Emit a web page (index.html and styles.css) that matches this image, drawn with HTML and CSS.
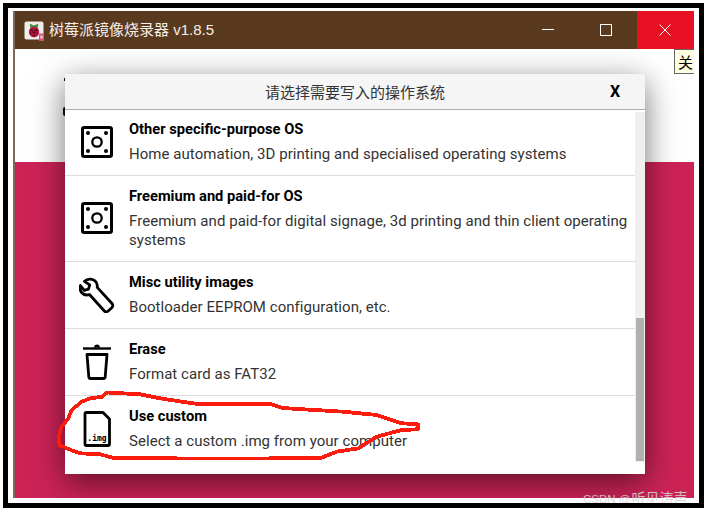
FILE: index.html
```html
<!DOCTYPE html>
<html lang="zh">
<head>
<meta charset="utf-8">
<title>树莓派镜像烧录器 v1.8.5</title>
<link rel="stylesheet" href="styles.css">
</head>
<body>
<div class="frame">
  <div class="window">
    <header class="titlebar">
      <svg class="app-icon" width="20" height="20" viewBox="0 0 20 20">
        <rect x="0.5" y="0.5" width="19" height="18" rx="2" fill="#efeeea"/>
        <path d="M6 3.5l3.5 2M14 3.5l-3.5 2M7 5h6v1.5H7z" stroke="#3f8a3a" stroke-width="1.6" fill="#3f8a3a"/>
        <circle cx="10" cy="11" r="5.2" fill="#b3183f"/>
        <circle cx="7.8" cy="9" r="1.3" fill="#5d0f25"/><circle cx="12.2" cy="9" r="1.3" fill="#5d0f25"/>
        <circle cx="10" cy="11.3" r="1.3" fill="#5d0f25"/><circle cx="7" cy="12.3" r="1.1" fill="#7c1230"/>
        <circle cx="13" cy="12.3" r="1.1" fill="#7c1230"/><circle cx="10" cy="14.5" r="1.1" fill="#5d0f25"/>
        <rect x="15" y="12.5" width="5" height="7.5" rx="0.8" fill="#d8557c"/>
        <rect x="16.5" y="14.5" width="2" height="3" fill="#f6d3de"/>
      </svg>
      <span class="app-title">树莓派镜像烧录器 v1.8.5</span>
      <div class="controls">
        <button class="ctl" aria-label="最小化"><svg width="14" height="14" viewBox="0 0 14 14"><path d="M1 6.500h12" stroke="#fff" stroke-width="1"/></svg></button>
        <button class="ctl" aria-label="最大化"><svg width="14" height="14" viewBox="0 0 14 14"><rect x="1.5" y="1.5" width="11" height="11" fill="none" stroke="#fff" stroke-width="1"/></svg></button>
        <button class="ctl ctl-close" aria-label="关闭"><svg width="14" height="14" viewBox="0 0 14 14"><path d="M1.5 1.500l11 11M12.500 1.500l-11 11" stroke="#fff" stroke-width="1"/></svg></button>
      </div>
    </header>
    <div class="content">
      <div class="upper"></div>
      <div class="lower"></div>
    </div>
    <span class="peek peek-a"></span>
    <span class="peek peek-b"></span>
    <div class="tooltip">关闭</div>

    <section class="modal">
      <div class="modal-head">
        <span class="head-side"></span>
        <span class="head-title">请选择需要写入的操作系统</span>
        <span class="head-side head-x">X</span>
      </div>
      <div class="list">
        <div class="row">
          <span class="icon"><svg width="36" height="36" viewBox="0 0 36 36"><use href="#disc"/></svg></span>
          <div class="text"><h3>Other specific-purpose OS</h3><p>Home automation, 3D printing and specialised operating systems</p></div>
        </div>
        <div class="row">
          <span class="icon"><svg width="36" height="36" viewBox="0 0 36 36"><use href="#disc"/></svg></span>
          <div class="text"><h3>Freemium and paid-for OS</h3><p>Freemium and paid-for digital signage, 3d printing and thin client operating systems</p></div>
        </div>
        <div class="row">
          <span class="icon"><svg width="36" height="36" viewBox="0 0 36 36">
            <path d="M11.500 2.200c-2.200-.2-4.400.6-6 2.100l5.200 3.600-1.200 4.300-4.200 1.200L1.400 8.600C.6 11 1 13.600 2.600 15.500c2 2.300 5.100 3 7.900 2l14.600 16.300c1.100 1.200 2.900 1.200 4.100.2l3.600-3.300c1.200-1.100 1.300-3 .2-4.200L18.200 10.400c.5-3-.6-5.200-2.200-6.500-1.300-1-2.800-1.500-4.500-1.700z" fill="none" stroke="#000" stroke-width="2.800" stroke-linejoin="round"/>
          </svg></span>
          <div class="text"><h3>Misc utility images</h3><p>Bootloader EEPROM configuration, etc.</p></div>
        </div>
        <div class="row">
          <span class="icon"><svg width="36" height="36" viewBox="0 0 36 36">
            <path d="M4 4.500h28" stroke="#000" stroke-width="2.400"/>
            <path d="M15 3.500c0-4 6-4 6 0z" fill="#000"/>
            <path d="M8 10.500h20l-1.800 22.400c-.1 1-.8 1.600-1.700 1.600H11.500c-.9 0-1.600-.6-1.700-1.600z" fill="none" stroke="#000" stroke-width="2.800" stroke-linejoin="round"/>
          </svg></span>
          <div class="text"><h3>Erase</h3><p>Format card as FAT32</p></div>
        </div>
        <div class="row row-last">
          <span class="icon"><svg width="36" height="36" viewBox="0 0 36 36">
            <path d="M7.500 1.500h16.500L30.500 8v25c0 .9-.6 1.500-1.500 1.500H7.500c-.9 0-1.500-.6-1.500-1.500V3c0-.9.6-1.500 1.500-1.500z" fill="none" stroke="#000" stroke-width="2.800" stroke-linejoin="round"/>
            <text class="img-label" x="18" y="29.500" text-anchor="middle">.img</text>
          </svg></span>
          <div class="text"><h3>Use custom</h3><p>Select a custom .img from your computer</p></div>
        </div>
      </div>
      <div class="track"></div>
      <div class="thumb"></div>
    </section>
  </div>

  <svg class="ink" width="709" height="512" viewBox="0 0 709 512">
    <path d="M107 392.500 L102 396.700 L90 398.500 L81.700 401.700 L71.700 410 L68.300 418.300 L61.700 426.700 L58.500 436.700 L59.500 445 L68.300 449 L80 453.300 L100 454.300 L115 458.300 L230 458.500 L320 458.300 L336.700 451.700 L358.300 448.300 L376.700 436.700 L401.700 430 L418 429.300 L418 424.300 L401.700 423.300 L376.700 415 L343.300 411.700 L303.300 409.300 L283 408 L271.700 404.300 L240 404.300 L200 404.300 L181.700 401.700 L160 398.300 L140 394.300 Z" fill="none" stroke="#fb1c10" stroke-width="3.800" stroke-linejoin="round" shape-rendering="crispEdges"/>
  </svg>
  <div class="mark"><span class="mark-latin">CSDN @</span>听见涛声</div>
</div>

<svg class="defs" width="0" height="0" aria-hidden="true">
  <defs>
    <g id="disc">
      <rect x="3.500" y="3.500" width="29" height="29" rx="1.800" fill="none" stroke="#000" stroke-width="3"/>
      <circle cx="9" cy="9" r="2" fill="#000"/><circle cx="27" cy="9" r="2" fill="#000"/>
      <circle cx="9" cy="27" r="2" fill="#000"/><circle cx="27" cy="27" r="2" fill="#000"/>
      <circle cx="18" cy="18" r="4.700" fill="none" stroke="#000" stroke-width="2.300"/>
    </g>
  </defs>
</svg>
</body>
</html>
```

FILE: styles.css
```css
* { box-sizing: border-box; }
html, body { margin: 0; padding: 0; background: #fff; }
body { width: 709px; height: 512px; overflow: hidden; padding: 3px 5px 4px 3px; }
.defs { position: absolute; }

.frame {
  height: 505px;
  border: 5px solid #000;
  background: #fff;
  padding: 3px 5px 5px 5px;
  overflow: hidden;
}
.frame > .ink { position: absolute; left: 0; top: 0; pointer-events: none; }
.mark {
  position: absolute;
  left: 583px;
  top: 487px;
  width: 115px;
  height: 16px;
  overflow: hidden;
  font: 14px/20px "Noto Sans CJK SC", sans-serif;
  color: rgba(214, 214, 214, .85);
  white-space: nowrap;
}
.mark-latin { font: 11.500px/20px "Liberation Sans", sans-serif; margin-right: 1px; }

.window {
  position: relative;
  height: 100%;
  display: flex;
  flex-direction: column;
  border-left: 2px solid #7d6a5a;
  overflow: hidden;
  font-family: Roboto, "Noto Sans CJK SC", sans-serif;
}

.titlebar {
  flex: 0 0 38px;
  display: flex;
  align-items: center;
  gap: 5px;
  padding-left: 9px;
  background: #5a3a1e;
  color: #fff;
}
.app-icon { flex: none; margin-top: 1px; }
.app-title {
  font: 15px/20px "Liberation Sans", "Noto Sans CJK SC", sans-serif;
  color: #f4efe9;
}
.controls { margin-left: auto; display: flex; height: 100%; }
.ctl {
  width: 58px;
  padding: 0 4px 0 0;
  border: 0;
  background: none;
  display: flex;
  align-items: center;
  justify-content: center;
}
.ctl-close { width: 57px; padding: 0 1px 0 0; background: #e81123; }

.content { flex: 1; display: flex; flex-direction: column; }
.upper { flex: 0 0 113px; background: #fff; }
.lower { flex: 1; background: #cc2357; }

.peek { position: absolute; background: #111; }
.peek-a { left: 49px; top: 67px; width: 1px; height: 3px; }
.peek-b { left: 48px; top: 96px; width: 2px; height: 9px; border-radius: 2px 0 0 2px; }

.tooltip {
  position: absolute;
  left: 659px;
  top: 38px;
  width: 40px;
  height: 25px;
  padding: 3px 0 0 3px;
  background: #ffffe1;
  border: 1px solid #666;
  font: 15px/18px "Noto Sans CJK SC", sans-serif;
  color: #000;
  white-space: nowrap;
  overflow: hidden;
}

.modal {
  position: absolute;
  left: 50px;
  top: 63px;
  width: 580px;
  height: 400px;
  background: #fff;
  box-shadow: 0 8px 30px rgba(0, 0, 0, .55);
  display: flex;
  flex-direction: column;
}
.modal-head {
  flex: 0 0 36px;
  display: flex;
  align-items: center;
  background: #f5f5f5;
  border-bottom: 1px solid #adadad;
}
.head-side { flex: 0 0 60px; text-align: center; }
.head-x { font: 700 16px/20px Roboto, sans-serif; color: #000; }
.head-title {
  flex: 1;
  text-align: center;
  font: 15px/20px "Noto Sans CJK SC", sans-serif;
  color: #333;
}

.list { flex: 1; overflow: hidden; }
.row {
  display: flex;
  align-items: center;
  gap: 14px;
  padding: 10px 14px 11px;
  border-bottom: 1px solid #dcdcdc;
}
.row:first-child { margin-top: -1px; }
.row-last { border-bottom: 0; }
.icon { flex: 0 0 36px; height: 36px; display: block; }
.icon svg { display: block; }
.text { flex: 1; min-width: 0; }
.text h3 { margin: 0 0 6px; font: 700 14.67px/20px Roboto, sans-serif; color: #000; }
.text p { margin: 0; font: 15px/19px Roboto, sans-serif; letter-spacing: .05px; color: #333; }
.img-label { font: 700 8px "DejaVu Sans Mono", "Liberation Mono", monospace; fill: #000; }

.track { position: absolute; right: 0; top: 38px; width: 10px; height: 350px; background: #f0f0f0; z-index: 1; }
.thumb { position: absolute; right: 1px; top: 244px; width: 8px; height: 143px; background: rgba(160, 160, 160, .8); z-index: 2; }
```
